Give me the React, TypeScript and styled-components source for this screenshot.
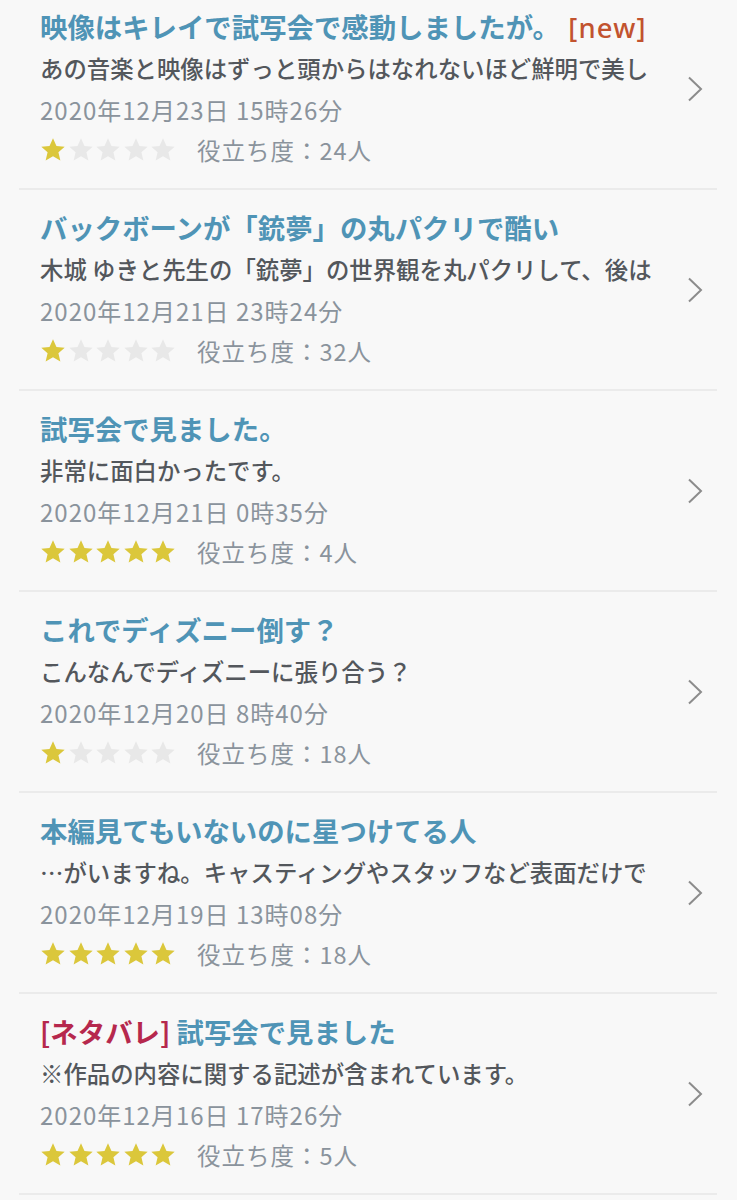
import { createGlobalStyle } from "styled-components";
import styled from "styled-components";

type Review = {
  title: string;
  tag?: "new" | "spoiler";
  body: string;
  date: string;
  stars: number;
  helpful: number;
};

const reviews: Review[] = [
  {
    title: "映像はキレイで試写会で感動しましたが。",
    tag: "new",
    body: "あの音楽と映像はずっと頭からはなれないほど鮮明で美し",
    date: "2020年12月23日 15時26分",
    stars: 1,
    helpful: 24,
  },
  {
    title: "バックボーンが「銃夢」の丸パクリで酷い",
    body: "木城 ゆきと先生の「銃夢」の世界観を丸パクリして、後は",
    date: "2020年12月21日 23時24分",
    stars: 1,
    helpful: 32,
  },
  {
    title: "試写会で見ました。",
    body: "非常に面白かったです。",
    date: "2020年12月21日 0時35分",
    stars: 5,
    helpful: 4,
  },
  {
    title: "これでディズニー倒す？",
    body: "こんなんでディズニーに張り合う？",
    date: "2020年12月20日 8時40分",
    stars: 1,
    helpful: 18,
  },
  {
    title: "本編見てもいないのに星つけてる人",
    body: "…がいますね。キャスティングやスタッフなど表面だけで",
    date: "2020年12月19日 13時08分",
    stars: 5,
    helpful: 18,
  },
  {
    title: "試写会で見ました",
    tag: "spoiler",
    body: "※作品の内容に関する記述が含まれています。",
    date: "2020年12月16日 17時26分",
    stars: 5,
    helpful: 5,
  },
];

const GlobalStyle = createGlobalStyle`
  html, body {
    margin: 0;
    padding: 0;
    background: #f8f8f8;
  }
  body {
    font-family: "Noto Sans CJK JP", "Noto Sans", sans-serif;
    overflow: hidden;
  }
`;

const Page = styled.div`
  width: 737px;
  height: 1200px;
  overflow: hidden;
  background: #f8f8f8;
`;

const List = styled.ul`
  list-style: none;
  margin: -11px 0 0;
  padding: 0 20px 0 19px;
`;

const Row = styled.li`
  display: flex;
  align-items: center;
  justify-content: space-between;
  height: 199px;
  border-bottom: 2px solid #ebebeb;
  padding: 0 0 0 21px;
`;

const Content = styled.div`
  flex: 1;
  min-width: 0;
  max-width: 622px;
  padding-bottom: 3px;
`;

const Title = styled.div`
  height: 44px;
  line-height: 44px;
  font-size: 27.4px;
  font-weight: 700;
  color: #4f94b6;
  white-space: nowrap;
`;

const Tag = styled.span<{ $kind: "new" | "spoiler" }>`
  color: ${(p) => (p.$kind === "new" ? "#c2532f" : "#b6284d")};
  font-family: ${(p) => (p.$kind === "new" ? `"Noto Sans", sans-serif` : "inherit")};
  font-weight: ${(p) => (p.$kind === "new" ? 500 : 700)};
  letter-spacing: ${(p) => (p.$kind === "new" ? "1.2px" : "0")};
`;

const Body = styled.div`
  height: 41px;
  line-height: 41px;
  font-size: 23.4px;
  font-weight: 500;
  color: #53575c;
  white-space: nowrap;
  overflow: hidden;
`;

const DateLine = styled.div`
  height: 41px;
  line-height: 41px;
  font-size: 24px;
  font-weight: 400;
  color: #8a939c;
  letter-spacing: 1px;
  white-space: nowrap;
`;

const Meta = styled.div`
  display: flex;
  align-items: center;
  height: 41px;
  gap: 21px;
`;

const Stars = styled.div`
  display: flex;
  gap: 1.5px;
`;

const Helpful = styled.span`
  font-size: 23.5px;
  font-weight: 400;
  color: #8a939c;
  letter-spacing: 1px;
`;

const Chevron = styled.svg`
  flex: none;
  width: 16px;
  height: 26px;
  margin-right: 14px;
`;

const Star = ({ on }: { on: boolean }) => (
  <svg width="26" height="26" viewBox="0 0 24 24">
    <path
      d="M12 1.2l3.2 7.1 7.6.7-5.8 5.1 1.8 7.6L12 17.8l-6.8 3.9 1.8-7.6-5.8-5.1 7.6-.7z"
      fill={on ? "#dbc73b" : "#e8e8e8"}
    />
  </svg>
);

export default function App() {
  return (
    <Page>
      <GlobalStyle />
      <List>
        {reviews.map((r, i) => (
          <Row key={i}>
            <Content>
              <Title>
                {r.tag === "spoiler" && <Tag $kind="spoiler">[ネタバレ] </Tag>}
                {r.title}
                {r.tag === "new" && <Tag $kind="new"> [new]</Tag>}
              </Title>
              <Body>{r.body}</Body>
              <DateLine>{r.date}</DateLine>
              <Meta>
                <Stars>
                  {[0, 1, 2, 3, 4].map((s) => (
                    <Star key={s} on={s < r.stars} />
                  ))}
                </Stars>
                <Helpful>役立ち度：{r.helpful}人</Helpful>
              </Meta>
            </Content>
            <Chevron viewBox="0 0 16 26">
              <path d="M2 1.5l12 11.5-12 11.5" fill="none" stroke="#8c8c8c" strokeWidth="2" />
            </Chevron>
          </Row>
        ))}
      </List>
    </Page>
  );
}
